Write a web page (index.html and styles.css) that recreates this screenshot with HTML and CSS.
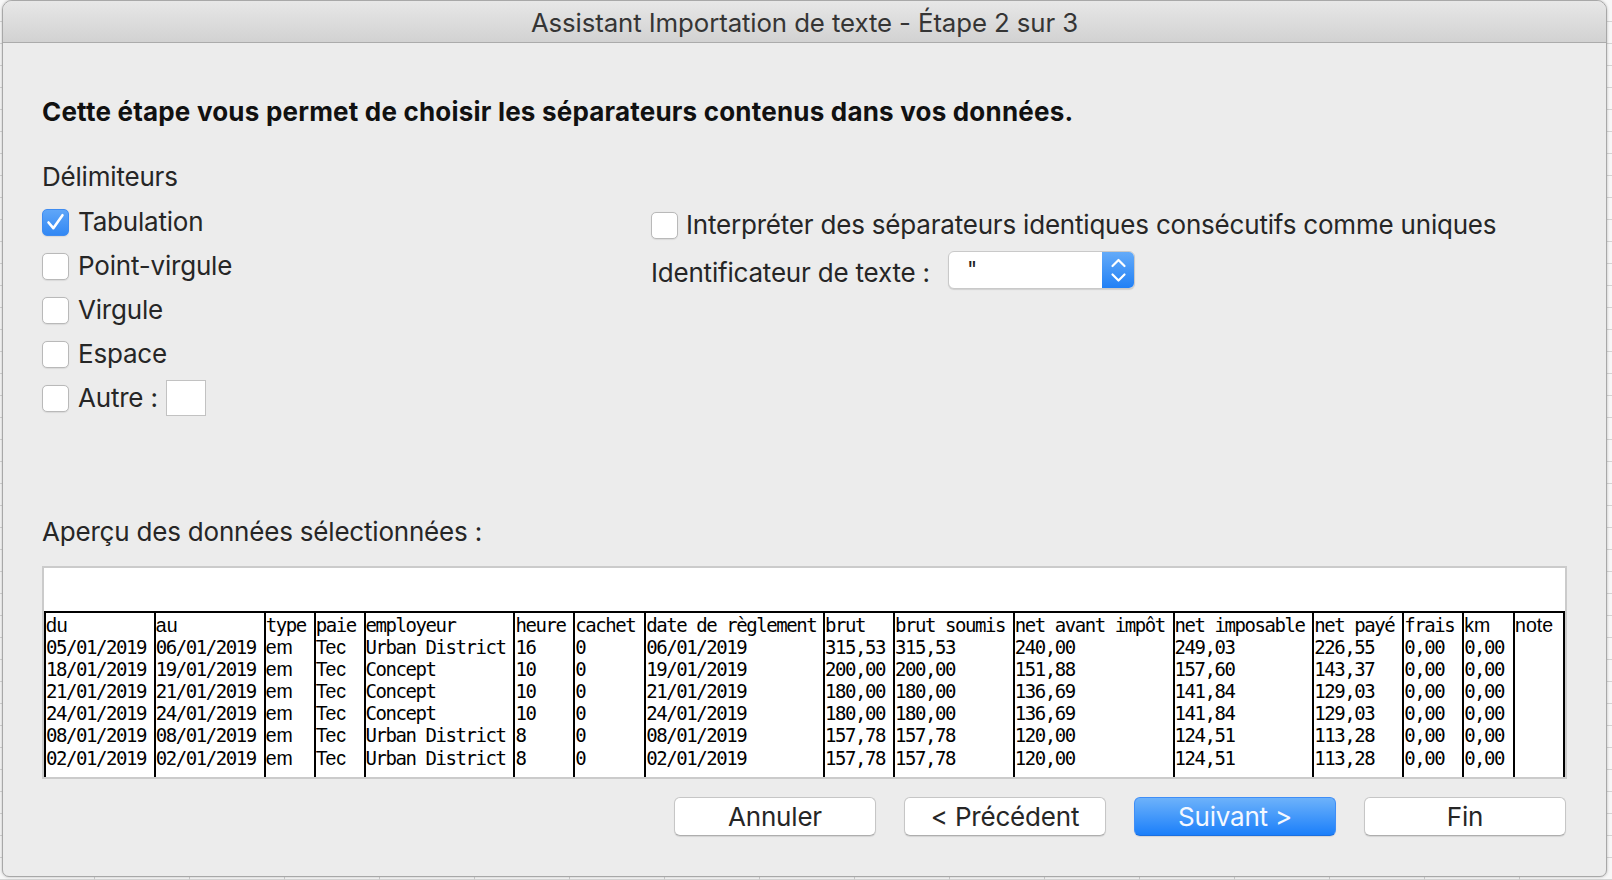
FILE: index.html
```html
<!DOCTYPE html>
<html lang="fr">
<head>
<meta charset="utf-8">
<title>Assistant Importation de texte</title>
<link rel="stylesheet" href="styles.css">
</head>
<body>
<div class="window">
  <div class="titlebar">Assistant Importation de texte - Étape 2 sur 3</div>
  <div class="content">
    <div class="heading">Cette étape vous permet de choisir les séparateurs contenus dans vos données.</div>
    <div class="label section-label">Délimiteurs</div>
    <div class="delims">
      <div class="delims-left">
        <div class="opt"><span class="cb checked"><svg width="27" height="27" viewBox="0 0 27 27"><path d="M6.5 13.5 L11.3 19.2 L20.5 6.2" fill="none" stroke="#fff" stroke-width="2.6" stroke-linecap="round" stroke-linejoin="round"/></svg></span><span class="label">Tabulation</span></div>
        <div class="opt"><span class="cb"></span><span class="label">Point-virgule</span></div>
        <div class="opt"><span class="cb"></span><span class="label">Virgule</span></div>
        <div class="opt"><span class="cb"></span><span class="label">Espace</span></div>
        <div class="opt"><span class="cb"></span><span class="label">Autre :</span><span class="other-box"></span></div>
      </div>
      <div class="delims-right">
        <div class="opt"><span class="cb"></span><span class="label">Interpréter des séparateurs identiques consécutifs comme uniques</span></div>
        <div class="ident">
          <span class="label ident-label">Identificateur de texte :</span>
          <div class="select">
            <span class="select-value">"</span>
            <span class="select-arrows"><svg width="33" height="38" viewBox="0 0 33 38"><path d="M10.5 15 L16.5 9 L22.5 15 M10.5 23.5 L16.5 29.5 L22.5 23.5" fill="none" stroke="#fff" stroke-width="2.2" stroke-linecap="round" stroke-linejoin="round"/></svg></span>
          </div>
        </div>
      </div>
    </div>
    <div class="label preview-label">Aperçu des données sélectionnées :</div>
    <div class="preview">
      <div class="preview-top"></div>
      <div class="grid">
        <div class="col c1"><div class="s">du</div><div>05/01/2019</div><div>18/01/2019</div><div>21/01/2019</div><div>24/01/2019</div><div>08/01/2019</div><div>02/01/2019</div></div>
        <div class="col c2"><div class="s">au</div><div>06/01/2019</div><div>19/01/2019</div><div>21/01/2019</div><div>24/01/2019</div><div>08/01/2019</div><div>02/01/2019</div></div>
        <div class="col c3"><div>type</div><div class="s">em</div><div class="s">em</div><div class="s">em</div><div class="s">em</div><div class="s">em</div><div class="s">em</div></div>
        <div class="col c4"><div>paie</div><div class="s">Tec</div><div class="s">Tec</div><div class="s">Tec</div><div class="s">Tec</div><div class="s">Tec</div><div class="s">Tec</div></div>
        <div class="col c5"><div>employeur</div><div>Urban District</div><div>Concept</div><div>Concept</div><div>Concept</div><div>Urban District</div><div>Urban District</div></div>
        <div class="col c6"><div>heure</div><div>16</div><div>10</div><div>10</div><div>10</div><div>8</div><div>8</div></div>
        <div class="col c7"><div>cachet</div><div>0</div><div>0</div><div>0</div><div>0</div><div>0</div><div>0</div></div>
        <div class="col c8"><div>date de règlement</div><div>06/01/2019</div><div>19/01/2019</div><div>21/01/2019</div><div>24/01/2019</div><div>08/01/2019</div><div>02/01/2019</div></div>
        <div class="col c9"><div>brut</div><div>315,53</div><div>200,00</div><div>180,00</div><div>180,00</div><div>157,78</div><div>157,78</div></div>
        <div class="col c10"><div>brut soumis</div><div>315,53</div><div>200,00</div><div>180,00</div><div>180,00</div><div>157,78</div><div>157,78</div></div>
        <div class="col c11"><div>net avant impôt</div><div>240,00</div><div>151,88</div><div>136,69</div><div>136,69</div><div>120,00</div><div>120,00</div></div>
        <div class="col c12"><div>net imposable</div><div>249,03</div><div>157,60</div><div>141,84</div><div>141,84</div><div>124,51</div><div>124,51</div></div>
        <div class="col c13"><div>net payé</div><div>226,55</div><div>143,37</div><div>129,03</div><div>129,03</div><div>113,28</div><div>113,28</div></div>
        <div class="col c14"><div>frais</div><div>0,00</div><div>0,00</div><div>0,00</div><div>0,00</div><div>0,00</div><div>0,00</div></div>
        <div class="col c15"><div class="s">km</div><div>0,00</div><div>0,00</div><div>0,00</div><div>0,00</div><div>0,00</div><div>0,00</div></div>
        <div class="col c16 last"><div class="s">note</div></div>
      </div>
    </div>
    <div class="buttons">
      <button class="btn">Annuler</button>
      <button class="btn">&lt; Précédent</button>
      <button class="btn primary">Suivant &gt;</button>
      <button class="btn">Fin</button>
    </div>
  </div>
</div>
</body>
</html>
```
FILE: styles.css
```css
* { box-sizing: border-box; }
html, body { margin: 0; padding: 0; }
body {
  width: 1612px;
  height: 880px;
  overflow: hidden;
  background-color: #f7f7f7;
  background-image:
    repeating-linear-gradient(to right, transparent 0, transparent 94px, #cfcfcf 94px, #cfcfcf 95px),
    repeating-linear-gradient(to bottom, transparent 0, transparent 21px, #d4d4d4 21px, #d4d4d4 22px);
  font-family: Inter, "Noto Sans", "Liberation Sans", sans-serif;
  color: #262626;
}
.window {
  width: 1605px;
  height: 877px;
  margin-left: 2px;
  border: 1px solid #a8a8a8;
  border-radius: 10px 10px 7px 7px;
  background: #ececec;
  overflow: hidden;
  display: flex;
  flex-direction: column;
  box-shadow: 0 0 3px rgba(0,0,0,0.25);
}
.titlebar {
  height: 42px;
  flex: none;
  border-bottom: 1px solid #ababab;
  background: linear-gradient(#e7e7e7, #d2d2d2);
  text-align: center;
  font-size: 25.8px;
  letter-spacing: -0.1px;
  line-height: 43px;
  color: #353535;
  font-family: Inter, "Liberation Sans", Arial, sans-serif;
}
.content {
  padding: 53px 39px 0 39px;
  display: flex;
  flex-direction: column;
}
.heading {
  font-size: 26px;
  font-weight: 700;
  line-height: 32px;
  letter-spacing: 0.2px;
  color: #111;
}
.label {
  font-size: 26px;
  line-height: 32px;
  letter-spacing: -0.2px;
  color: #262626;
  white-space: nowrap;
}
.section-label { margin-top: 33px; }
.delims {
  display: flex;
  margin-top: 13px;
}
.delims-left {
  width: 609px;
  display: flex;
  flex-direction: column;
  gap: 12px;
}
.delims-right {
  padding-top: 3px;
  display: flex;
  flex-direction: column;
}
.opt {
  height: 32px;
  display: flex;
  align-items: center;
}
.cb {
  width: 27px;
  height: 27px;
  flex: none;
  border: 1px solid #b9b9b9;
  border-radius: 5px;
  background: #fff;
  margin-right: 9px;
  box-shadow: 0 0.5px 1px rgba(0,0,0,0.08);
  display: flex;
}
.delims-right .cb { margin-right: 8px; }
.cb.checked {
  border-color: #3f8cf1;
  background: linear-gradient(#5fa6f8, #3288f4);
}
.cb.checked svg { margin: -1px; }
.other-box {
  width: 40px;
  height: 36px;
  flex: none;
  margin-left: 8px;
  background: #fff;
  border: 1px solid #c2c2c2;
}
.ident {
  display: flex;
  align-items: center;
  margin-top: 10px;
  gap: 18px;
}
.ident-label { margin-top: 6px; }
.select {
  width: 187px;
  height: 38px;
  display: flex;
  border: 1px solid #c9c9c9;
  border-radius: 6px;
  background: #fff;
  overflow: hidden;
  box-shadow: 0 1px 1px rgba(0,0,0,0.12);
}
.select-value {
  flex: 1;
  padding-left: 18px;
  font-size: 22px;
  line-height: 34px;
  color: #222;
}
.select-arrows {
  width: 33px;
  flex: none;
  margin: -1px -1px -1px 0;
  height: 38px;
  background: linear-gradient(#66acf9, #1f7ff5);
  display: flex;
}
.preview-label { margin-top: 102px; }
.preview {
  margin-top: 18px;
  height: 213px;
  border: 2px solid #cbcbcb;
  background: #fff;
  display: flex;
  flex-direction: column;
}
.preview-top { height: 43px; flex: none; }
.grid {
  flex: 1;
  display: flex;
  border-top: 2px solid #000;
}
.col {
  border-left: 2px solid #000;
  padding-top: 1px;
  font-family: "DejaVu Sans Mono", "Liberation Mono", monospace;
  font-size: 19px;
  letter-spacing: -1.44px;
  line-height: 22.1px;
  color: #000;
  white-space: nowrap;
  overflow: hidden;
}
.col .s {
  font-family: "Liberation Sans", Arial, sans-serif;
  font-size: 19.5px;
  letter-spacing: 0;
}
.col.last { border-right: 2px solid #000; }
.c1 { width: 110px; }
.c2 { width: 110px; }
.c3 { width: 50px; }
.c4 { width: 50px; }
.c5 { width: 150px; }
.c6 { width: 60px; }
.c7 { width: 71px; }
.c8 { width: 179px; }
.c9 { width: 70px; }
.c10 { width: 120px; }
.c11 { width: 160px; }
.c12 { width: 140px; }
.c13 { width: 90px; }
.c14 { width: 60px; }
.c15 { width: 51px; }
.c16 { width: 52px; }
.buttons {
  margin-top: 18px;
  display: flex;
  justify-content: flex-end;
  gap: 28px;
  padding-right: 1px;
}
.btn {
  width: 202px;
  height: 39px;
  border: 1px solid #c6c6c6;
  border-bottom-color: #aeaeae;
  border-radius: 6px;
  background: #fff;
  font-family: Inter, "Liberation Sans", sans-serif;
  font-size: 26px;
  letter-spacing: -0.2px;
  color: #262626;
  padding: 0;
  line-height: 36px;
  box-shadow: 0 1px 1px rgba(0,0,0,0.1);
}
.btn.primary {
  border-color: #3f8ef7;
  border-bottom-color: #1a6fe0;
  background: linear-gradient(#6db2fa, #1b7ffa);
  color: #f4f8ff;
}
```
